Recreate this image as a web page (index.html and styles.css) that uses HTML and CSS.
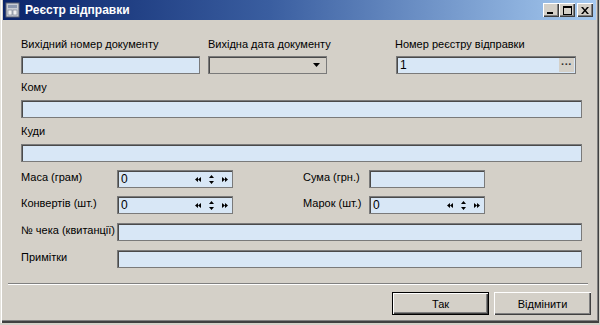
FILE: index.html
```html
<!DOCTYPE html>
<html lang="uk">
<head>
    <meta charset="UTF-8">
    <title>Реєстр відправки</title>
    <link rel="stylesheet" href="styles.css">
</head>
<body>
    <div class="window">
        <div class="titlebar">
            <svg class="app-icon" width="16" height="16" viewBox="0 0 16 16">
                <rect x="1" y="1" width="13" height="14" fill="#c8ccd4" stroke="#5a6070"/>
                <rect x="3" y="3" width="9" height="3" fill="#8c98b0"/>
                <rect x="3" y="8" width="4" height="5" fill="#f0f0f0" stroke="#707888" stroke-width="0.6"/>
                <rect x="8" y="8" width="4" height="5" fill="#f0f0f0" stroke="#707888" stroke-width="0.6"/>
            </svg>
            <span class="title">Реєстр відправки</span>
            <div class="caption-btns">
                <button class="cap-btn"><svg width="8" height="7" viewBox="0 0 8 7"><rect x="0" y="5" width="6" height="2" fill="#000"/></svg></button>
                <button class="cap-btn"><svg width="9" height="9" viewBox="0 0 9 9"><rect x="0.5" y="0.5" width="8" height="8" fill="none" stroke="#000"/><rect x="0" y="0" width="9" height="2" fill="#000"/></svg></button>
                <button class="cap-btn close"><svg width="8" height="7" viewBox="0 0 8 7"><path d="M0 0h2l2 2.5L6 0h2L5 3.5 8 7H6L4 4.5 2 7H0l3-3.5z" fill="#000"/></svg></button>
            </div>
        </div>

        <div class="content">
            <div class="top-row">
                <div class="field col-num">
                    <div class="label">Вихідний номер документу</div>
                    <div class="input"></div>
                </div>
                <div class="field col-date">
                    <div class="label">Вихідна дата документу</div>
                    <div class="input combo">
                        <svg class="drop" width="7" height="4" viewBox="0 0 7 4"><path d="M0 0h7L3.5 4z" fill="#000"/></svg>
                    </div>
                </div>
                <div class="field col-reg">
                    <div class="label">Номер реєстру відправки</div>
                    <div class="input">
                        <span class="value">1</span>
                        <span class="ellipsis">···</span>
                    </div>
                </div>
            </div>

            <div class="field stacked">
                <div class="label">Кому</div>
                <div class="input"></div>
            </div>
            <div class="field stacked">
                <div class="label">Куди</div>
                <div class="input"></div>
            </div>

            <div class="pairs">
                <div class="label side">Маса (грам)</div>
                <div class="input spin">
                    <span class="value">0</span>
                    <span class="spin-btns">
                        <svg width="6" height="5" viewBox="0 0 6 5"><path d="M3 0v5L0 2.5zM6 0v5L3 2.5z" fill="#000"/></svg>
                        <svg width="5" height="11" viewBox="0 0 5 11"><path d="M2.5 1L5 4H0zM2.5 10L5 7H0z" fill="#000"/></svg>
                        <svg width="6" height="5" viewBox="0 0 6 5"><path d="M0 0v5l3-2.5zM3 0v5l3-2.5z" fill="#000"/></svg>
                    </span>
                </div>
                <div class="label side right-label">Сума (грн.)</div>
                <div class="input"></div>

                <div class="label side">Конвертів (шт.)</div>
                <div class="input spin">
                    <span class="value">0</span>
                    <span class="spin-btns">
                        <svg width="6" height="5" viewBox="0 0 6 5"><path d="M3 0v5L0 2.5zM6 0v5L3 2.5z" fill="#000"/></svg>
                        <svg width="5" height="11" viewBox="0 0 5 11"><path d="M2.5 1L5 4H0zM2.5 10L5 7H0z" fill="#000"/></svg>
                        <svg width="6" height="5" viewBox="0 0 6 5"><path d="M0 0v5l3-2.5zM3 0v5l3-2.5z" fill="#000"/></svg>
                    </span>
                </div>
                <div class="label side right-label">Марок (шт.)</div>
                <div class="input spin">
                    <span class="value">0</span>
                    <span class="spin-btns">
                        <svg width="6" height="5" viewBox="0 0 6 5"><path d="M3 0v5L0 2.5zM6 0v5L3 2.5z" fill="#000"/></svg>
                        <svg width="5" height="11" viewBox="0 0 5 11"><path d="M2.5 1L5 4H0zM2.5 10L5 7H0z" fill="#000"/></svg>
                        <svg width="6" height="5" viewBox="0 0 6 5"><path d="M0 0v5l3-2.5zM3 0v5l3-2.5z" fill="#000"/></svg>
                    </span>
                </div>
            </div>

            <div class="line-row">
                <div class="label side">№ чека (квитанції)</div>
                <div class="input"></div>
            </div>
            <div class="line-row">
                <div class="label side">Примітки</div>
                <div class="input"></div>
            </div>
        </div>

        <div class="separator"></div>

        <div class="buttons">
            <button class="btn default">Так</button>
            <button class="btn">Відмінити</button>
        </div>
    </div>
</body>
</html>
```

FILE: styles.css
```css
body {
    margin: 0;
    background-color: #d4d0c8;
    font-family: 'Liberation Sans', Arial, sans-serif;
    font-size: 11px;
    color: #000;
}
.window {
    width: 599px;
    height: 323px;
    box-sizing: border-box;
    padding: 0 3px 3px 3px;
    background-color: #d4d0c8;
    box-shadow: inset 1px 0 #e4e2dc, inset 2px 0 #fff, inset -1px -2px #404040, inset -2px -3px #808080;
}
.titlebar {
    height: 20px;
    display: flex;
    align-items: center;
    padding-left: 2px;
    background: linear-gradient(to right, #0a246a 0%, #3a5ea0 45%, #a6caf0 100%);
}
.app-icon {
    margin-right: 4px;
}
.title {
    color: #fff;
    font-weight: bold;
    font-size: 12px;
    flex-grow: 1;
}
.caption-btns {
    display: flex;
    margin-right: 3px;
}
.cap-btn {
    width: 16px;
    height: 14px;
    padding: 0;
    border: none;
    background-color: #d4d0c8;
    box-shadow: inset 1px 1px #fff, inset -1px -1px #404040, inset -2px -2px #808080;
    display: flex;
    align-items: center;
    justify-content: center;
}
.cap-btn.close {
    margin-left: 2px;
}
.content {
    padding: 17px 14px 0 18px;
}
.label {
    height: 14px;
    line-height: 14px;
    white-space: nowrap;
}
.input {
    height: 18px;
    box-sizing: border-box;
    background-color: #d8e7f6;
    border: 1px solid #7a7a7a;
    box-shadow: inset 1px 1px #4a4a4a;
    display: flex;
    align-items: center;
}
.field .label {
    margin-bottom: 5px;
}
.top-row {
    display: flex;
}
.col-num {
    width: 179px;
}
.col-date {
    width: 119px;
    margin-left: 8px;
}
.col-reg {
    width: 180px;
    margin-left: 69px;
}
.col-reg .label {
    margin-left: -1px;
}
.combo {
    background-color: #d4d0c8;
    justify-content: flex-end;
    padding-right: 6px;
}
.value {
    flex-grow: 1;
    padding-left: 3px;
    font-size: 12px;
    line-height: 16px;
}
.ellipsis {
    width: 15px;
    height: 14px;
    margin-right: 1px;
    background-color: #d4d0c8;
    text-align: center;
    line-height: 12px;
    font-weight: bold;
    font-size: 11px;
    color: #333;
}
.stacked {
    margin-top: 6px;
}
.stacked .label {
    margin-bottom: 6px;
}
.pairs {
    margin-top: 8px;
    display: grid;
    grid-template-columns: 96px 116px 70px 66px 116px;
    grid-template-rows: 18px 18px;
    row-gap: 8px;
}
.pairs .right-label {
    grid-column: 4;
}
.side {
    line-height: 14px;
    align-self: center;
    margin-top: -4px;
}
.spin-btns {
    display: flex;
    align-items: center;
    gap: 8px;
    padding-right: 4px;
}
.line-row {
    margin-top: 9px;
    display: grid;
    grid-template-columns: 96px 1fr;
}
.separator {
    margin: 15px 8px 0 5px;
    height: 0;
    border-top: 1px solid #808080;
    border-bottom: 1px solid #fff;
}
.buttons {
    display: flex;
    justify-content: flex-end;
    gap: 5px;
    margin-top: 7px;
    padding-right: 5px;
}
.btn {
    width: 97px;
    height: 23px;
    padding: 0;
    font-family: 'Liberation Sans', Arial, sans-serif;
    font-size: 11px;
    color: #000;
    border: none;
    background-color: #d4d0c8;
    box-shadow: inset 1px 1px #fff, inset -1px -1px #404040, inset -2px -2px #808080;
}
.btn.default {
    border: 1px solid #000;
}
```
